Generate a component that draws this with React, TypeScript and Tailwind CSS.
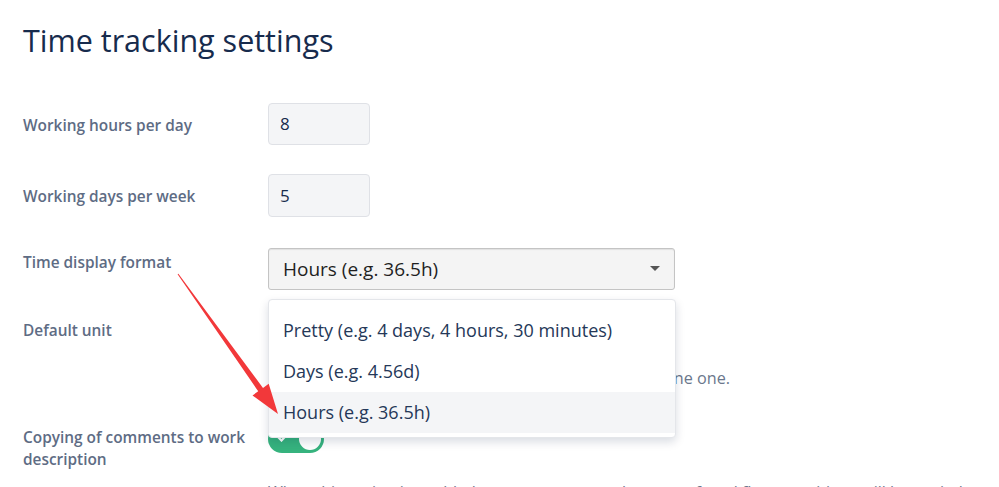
import React from 'react';

const font = { fontFamily: '"Open Sans", "Noto Sans", sans-serif' };

const Label = ({ children }: { children: React.ReactNode }) => (
  <div className="w-[245px] shrink-0 pr-4 text-[15.4px] font-semibold leading-[22px] text-[#5e6c84]">{children}</div>
);

const App: React.FC = () => {
  return (
    <div className="relative h-[487px] w-[999px] overflow-hidden bg-white text-[#172b4d]" style={font}>
      <div className="px-[23px] pt-[20px]">
        <h1 className="text-[30.5px] font-normal leading-[40px] text-[#172b4d]">Time tracking settings</h1>

        <div className="mt-[43px] flex flex-col">
          {/* hours per day */}
          <div className="flex items-center">
            <div className="pt-[3px]">
              <Label>Working hours per day</Label>
            </div>
            <div className="flex h-[42px] w-[102px] items-center rounded-[4px] border border-[#dfe1e6] bg-[#f4f5f7] px-[11px] text-[17px]">8</div>
          </div>

          {/* days per week */}
          <div className="mt-[29px] flex items-center">
            <div className="pt-[3px]">
              <Label>Working days per week</Label>
            </div>
            <div className="flex h-[43px] w-[102px] items-center rounded-[4px] border border-[#dfe1e6] bg-[#f4f5f7] px-[11px] text-[17px]">5</div>
          </div>

          {/* display format */}
          <div className="relative mt-[31px] flex items-start">
            <div className="pt-[4px]">
              <Label>Time display format</Label>
            </div>
            <div className="flex h-[42px] w-[407px] items-center justify-between rounded-[3px] border border-[#c4c4c4] bg-[#f4f4f4] pl-[14px] pr-[14px] text-[19px] text-[#1f1f1f] shadow-[inset_0_1px_1px_rgba(0,0,0,0.08)]">
              <span>Hours (e.g. 36.5h)</span>
              <svg width="10" height="6" viewBox="0 0 10 6"><path d="M0 0h10L5 5z" fill="#555" /></svg>
            </div>
          </div>

          {/* default unit (its select is covered by the open menu) */}
          <div className="mt-[29px] flex items-start">
            <div className="pt-[1px]">
              <Label>Default unit</Label>
            </div>
            <div className="flex flex-col">
              <div className="h-[42px] w-[407px] rounded-[3px] border border-[#c4c4c4] bg-[#f4f4f4]" />
              <div className="mt-[5px] whitespace-nowrap text-[16.2px] text-[#6b778c]">Leave it empty to let the time tracking system determine one.</div>
            </div>
          </div>

          {/* copying comments */}
          <div className="mt-[33px] flex items-start">
            <div className="pt-[4px]">
              <Label>Copying of comments to work description</Label>
            </div>
            <div className="flex flex-col">
              <div className="relative mt-[2px] flex h-[28px] w-[56px] items-center rounded-full bg-[#36b37e] px-[3px]">
                <svg className="ml-[6px] -mt-[4px]" width="12" height="10" viewBox="0 0 12 10"><path d="M1 5l3.5 3.5L11 1.5" stroke="#fff" strokeWidth="2.2" fill="none" /></svg>
                <div className="ml-auto h-[22px] w-[22px] rounded-full bg-white" />
              </div>
              <div className="mt-[27px] whitespace-nowrap text-[16px] text-[#6b778c]">When this option is enabled, comments entered as part of workflow transitions will be copied.</div>
            </div>
          </div>
        </div>
      </div>

      {/* open dropdown menu */}
      <div className="absolute left-[268px] top-[299px] w-[408px] rounded-[4px] border border-[#e4e6ea] bg-white pb-[4px] pt-[10px] shadow-[0_4px_10px_rgba(9,30,66,0.15)]">
        <div className="flex h-[41px] items-center px-[14px] text-[18px] text-[#253858]">Pretty (e.g. 4 days, 4 hours, 30 minutes)</div>
        <div className="flex h-[41px] items-center px-[14px] text-[18px] text-[#253858]">Days (e.g. 4.56d)</div>
        <div className="flex h-[41px] items-center bg-[#f4f5f7] px-[14px] text-[18px] text-[#253858]">Hours (e.g. 36.5h)</div>
      </div>

      {/* annotation arrow */}
      <svg className="pointer-events-none absolute left-0 top-0" width="999" height="487" viewBox="0 0 999 487">
        <polygon points="177.6,274.3 258.2,391.3 252.5,395.4 278,414 268.7,383.8 263,387.9 178.4,273.7" fill="#f2383a" />
      </svg>
    </div>
  );
};

export default App;
